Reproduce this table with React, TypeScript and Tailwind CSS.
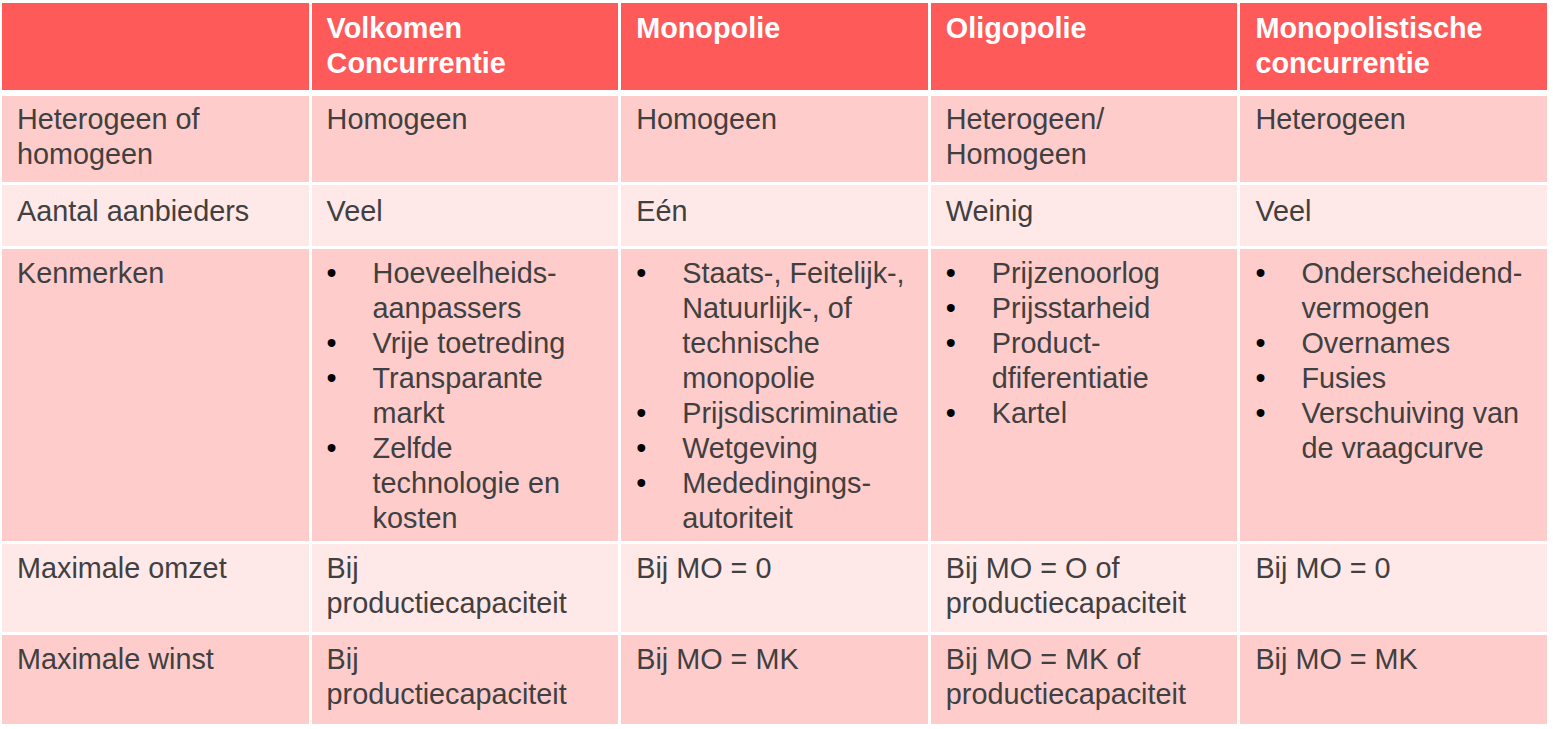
import React from "react";

type Cell = { lines?: string[]; bullets?: string[][] };

const header = [
  [],
  ["Volkomen", "Concurrentie"],
  ["Monopolie"],
  ["Oligopolie"],
  ["Monopolistische", "concurrentie"],
];

const rows: { bg: string; pt: string; cells: Cell[] }[] = [
  {
    bg: "bg-[#ffcccc]",
    pt: "pt-[6px]",
    cells: [
      { lines: ["Heterogeen of", "homogeen"] },
      { lines: ["Homogeen"] },
      { lines: ["Homogeen"] },
      { lines: ["Heterogeen/", "Homogeen"] },
      { lines: ["Heterogeen"] },
    ],
  },
  {
    bg: "bg-[#ffe8e8]",
    pt: "pt-[9px]",
    cells: [
      { lines: ["Aantal aanbieders"] },
      { lines: ["Veel"] },
      { lines: ["Eén"] },
      { lines: ["Weinig"] },
      { lines: ["Veel"] },
    ],
  },
  {
    bg: "bg-[#ffcccc]",
    pt: "pt-[7px]",
    cells: [
      { lines: ["Kenmerken"] },
      {
        bullets: [
          ["Hoeveelheids-", "aanpassers"],
          ["Vrije toetreding"],
          ["Transparante", "markt"],
          ["Zelfde", "technologie en", "kosten"],
        ],
      },
      {
        bullets: [
          ["Staats-, Feitelijk-,", "Natuurlijk-, of", "technische", "monopolie"],
          ["Prijsdiscriminatie"],
          ["Wetgeving"],
          ["Mededingings-", "autoriteit"],
        ],
      },
      {
        bullets: [
          ["Prijzenoorlog"],
          ["Prijsstarheid"],
          ["Product-", "dfiferentiatie"],
          ["Kartel"],
        ],
      },
      {
        bullets: [
          ["Onderscheidend-", "vermogen"],
          ["Overnames"],
          ["Fusies"],
          ["Verschuiving van", "de vraagcurve"],
        ],
      },
    ],
  },
  {
    bg: "bg-[#ffe8e8]",
    pt: "pt-[7px]",
    cells: [
      { lines: ["Maximale omzet"] },
      { lines: ["Bij", "productiecapaciteit"] },
      { lines: ["Bij MO = 0"] },
      { lines: ["Bij MO = O of", "productiecapaciteit"] },
      { lines: ["Bij MO = 0"] },
    ],
  },
  {
    bg: "bg-[#ffcccc]",
    pt: "pt-[7px]",
    cells: [
      { lines: ["Maximale winst"] },
      { lines: ["Bij", "productiecapaciteit"] },
      { lines: ["Bij MO = MK"] },
      { lines: ["Bij MO = MK of", "productiecapaciteit"] },
      { lines: ["Bij MO = MK"] },
    ],
  },
];

function Lines({ lines }: { lines: string[] }) {
  return (
    <>
      {lines.map((l, i) => (
        <div key={i} className="whitespace-nowrap">
          {l}
        </div>
      ))}
    </>
  );
}

export default function App() {
  return (
    <div className="w-[1553px] h-[729px] bg-white pt-[3px] pl-[2px] font-['Liberation_Sans',Arial,sans-serif] text-[28.8px] leading-[35px]">
      <div className="w-[1545px] flex flex-col">
        <div className="grid grid-cols-5 gap-[3px] h-[87px]">
          {header.map((h, i) => (
            <div key={`h${i}`} className="bg-[#ff5a5a] text-white font-bold pt-[8px] px-[15px]">
              <Lines lines={h} />
            </div>
          ))}
        </div>
        <div className="mt-[6px] grid grid-cols-5 gap-[3px] grid-rows-[86px_61px_292px_88px_89px]">
          {rows.map((r, ri) =>
            r.cells.map((c, ci) => (
              <div key={`${ri}-${ci}`} className={`${r.bg} ${r.pt} text-[#404040] px-[15px]`}>
                {c.lines && <Lines lines={c.lines} />}
                {c.bullets &&
                  c.bullets.map((b, bi) => (
                    <div key={bi} className="flex">
                      <span className="w-[46px] shrink-0 text-black">•</span>
                      <div>
                        <Lines lines={b} />
                      </div>
                    </div>
                  ))}
              </div>
            ))
          )}
        </div>
      </div>
    </div>
  );
}
